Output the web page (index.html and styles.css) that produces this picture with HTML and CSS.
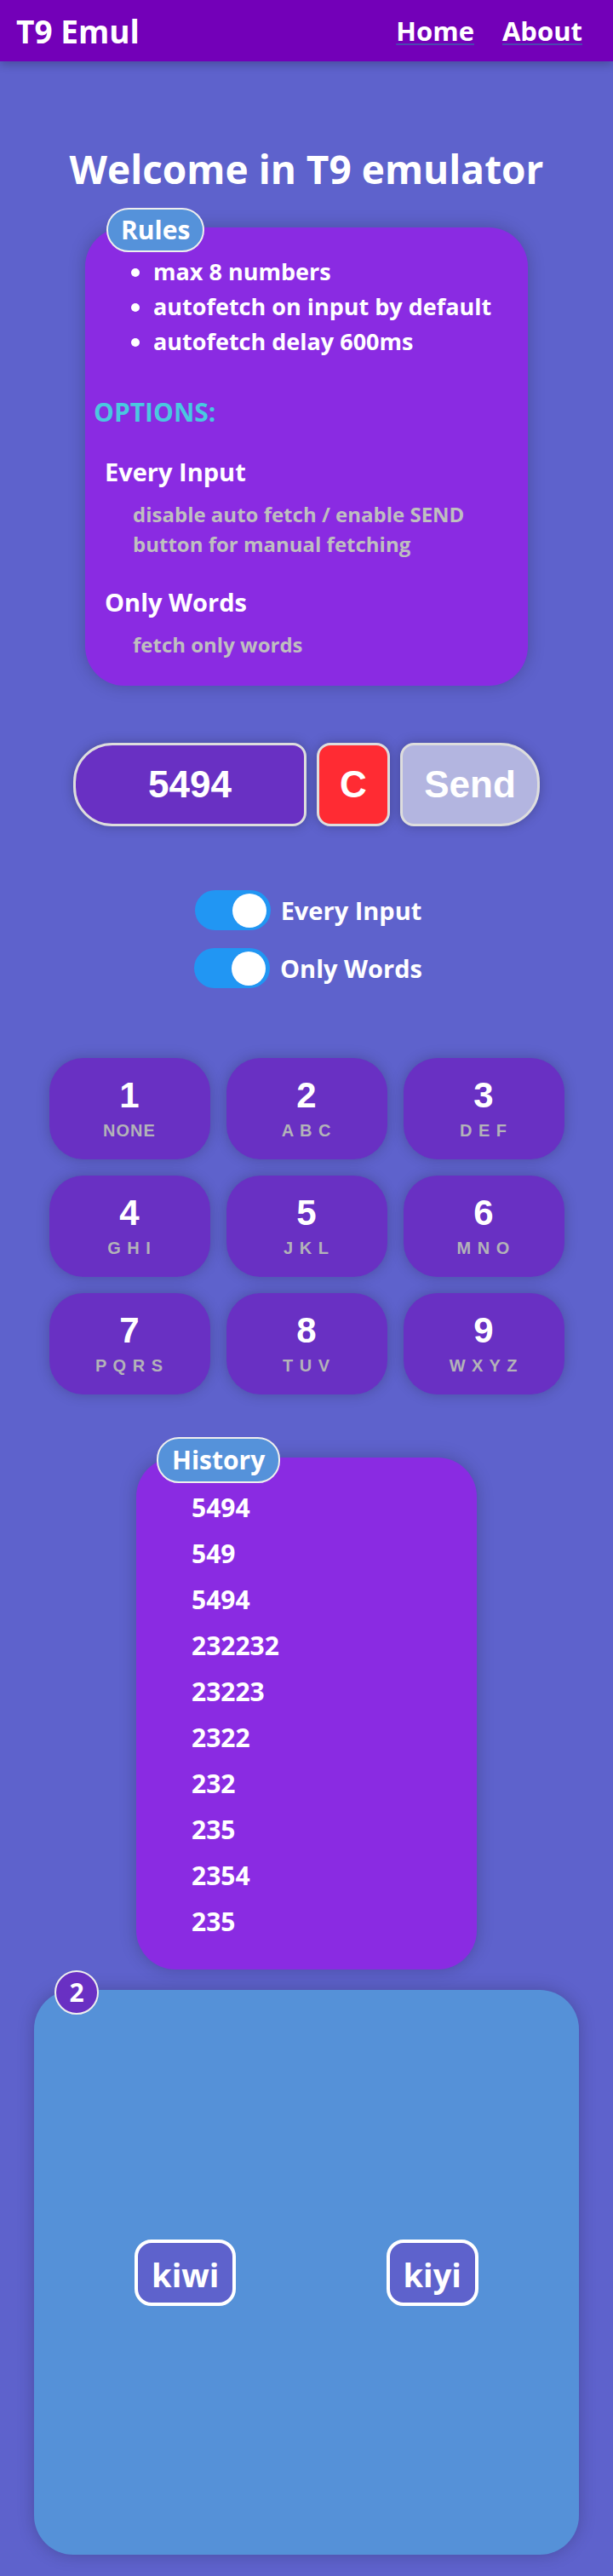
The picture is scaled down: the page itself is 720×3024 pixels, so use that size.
FILE: index.html
```
<!DOCTYPE html>
<html lang="en">
<head>
<meta charset="utf-8">
<title>T9 Emul</title>
<link rel="stylesheet" href="styles.css">
</head>
<body>
<header class="topbar">
  <div class="brand">T9 Emul</div>
  <nav class="nav">
    <a class="nav-link" href="#">Home</a>
    <a class="nav-link" href="#">About</a>
  </nav>
</header>
<main class="page">
  <h1 class="title">Welcome in T9 emulator</h1>

  <section class="card rules">
    <span class="badge">Rules</span>
    <ul class="rules-list">
      <li>max 8 numbers</li>
      <li>autofetch on input by default</li>
      <li>autofetch delay 600ms</li>
    </ul>
    <h3 class="options-title">OPTIONS:</h3>
    <dl class="options">
      <dt>Every Input</dt>
      <dd>disable auto fetch / enable SEND button for manual fetching</dd>
      <dt>Only Words</dt>
      <dd>fetch only words</dd>
    </dl>
  </section>

  <div class="entry">
    <div class="entry-field">5494</div>
    <div class="entry-btn clear">C</div>
    <div class="entry-btn send">Send</div>
  </div>

  <div class="toggles">
    <label class="toggle-row"><span class="switch"><span class="knob"></span></span><span class="toggle-label">Every Input</span></label>
    <label class="toggle-row"><span class="switch"><span class="knob"></span></span><span class="toggle-label">Only Words</span></label>
  </div>

  <div class="keypad">
    <div class="key"><span class="digit">1</span><span class="letters">NONE</span></div>
    <div class="key"><span class="digit">2</span><span class="letters">A B C</span></div>
    <div class="key"><span class="digit">3</span><span class="letters">D E F</span></div>
    <div class="key"><span class="digit">4</span><span class="letters">G H I</span></div>
    <div class="key"><span class="digit">5</span><span class="letters">J K L</span></div>
    <div class="key"><span class="digit">6</span><span class="letters">M N O</span></div>
    <div class="key"><span class="digit">7</span><span class="letters">P Q R S</span></div>
    <div class="key"><span class="digit">8</span><span class="letters">T U V</span></div>
    <div class="key"><span class="digit">9</span><span class="letters">W X Y Z</span></div>
  </div>

  <section class="card history">
    <span class="badge">History</span>
    <ul class="history-list">
      <li>5494</li>
      <li>549</li>
      <li>5494</li>
      <li>232232</li>
      <li>23223</li>
      <li>2322</li>
      <li>232</li>
      <li>235</li>
      <li>2354</li>
      <li>235</li>
    </ul>
  </section>

  <section class="card results">
    <span class="badge count">2</span>
    <div class="words">
      <span class="word">kiwi</span>
      <span class="word">kiyi</span>
    </div>
  </section>
</main>
</body>
</html>
```

FILE: styles.css
```
* { box-sizing: border-box; }

html, body {
  margin: 0;
  padding: 0;
}

body {
  background: #5e62cc;
  color: #ffffff;
  font-family: "Open Sans", "Noto Sans", sans-serif;
  font-weight: 700;
}

.topbar {
  height: 72px;
  background: #7300b8;
  display: flex;
  align-items: center;
  justify-content: space-between;
  padding: 0 36px 0 19px;
  box-shadow: 0 4px 10px rgba(0, 0, 0, 0.22);
  position: relative;
}

.brand {
  font-size: 37px;
  line-height: 1;
}

.nav {
  display: flex;
  gap: 33px;
}

.nav-link {
  color: #ffffff;
  font-size: 31px;
  line-height: 1;
  text-decoration: underline;
  text-decoration-color: #4b48b0;
  text-decoration-thickness: 2px;
  text-underline-offset: 3px;
}

.page {
  display: flex;
  flex-direction: column;
  align-items: center;
  padding-bottom: 25px;
}

.title {
  margin: 95px 0 0;
  font-size: 46px;
  line-height: 62px;
  font-weight: 700;
}

.card {
  position: relative;
  background: #8a2be2;
  border-radius: 46px;
  box-shadow: 0 0 20px rgba(0, 0, 0, 0.22);
}

.badge {
  position: absolute;
  left: 25px;
  top: -23px;
  background: #5592da;
  border: 2px solid #eeeeee;
  border-radius: 26px;
  padding: 4px 15px;
  font-size: 30px;
  line-height: 40px;
}

.rules {
  margin-top: 38px;
  width: 520px;
  padding: 31px 10px 31px 10px;
}

.rules-list {
  margin: 0;
  padding-left: 70px;
  font-size: 27px;
  line-height: 41px;
}

.options-title {
  margin: 43px 0 0;
  font-size: 30px;
  line-height: 40px;
  color: #4ac8e0;
}

.options {
  margin: 0;
}

.options dt {
  margin-top: 30px;
  padding-left: 13px;
  font-size: 29px;
  line-height: 40px;
}

.options dt + dd + dt {
  margin-top: 31px;
}

.options dd {
  margin: 12px 0 0 46px;
  font-size: 24px;
  line-height: 35px;
  color: #bfbfbf;
}

.entry {
  margin-top: 67px;
  display: flex;
  gap: 12px;
  font-family: "Liberation Sans", Arial, sans-serif;
  font-weight: 700;
  font-size: 44px;
}

.entry-field,
.entry-btn {
  height: 98px;
  border: 3px solid #dddddd;
  display: flex;
  align-items: center;
  justify-content: center;
  box-shadow: 0 0 14px rgba(0, 0, 0, 0.25);
}

.entry-field {
  width: 274px;
  background: #6930c3;
  border-radius: 46px 16px 16px 46px;
}

.clear {
  width: 86px;
  background: #ff2b33;
  border-radius: 16px;
}

.send {
  width: 164px;
  background: #b3b5e0;
  border-radius: 16px 46px 46px 16px;
}

.toggles {
  margin-top: 75px;
  padding-left: 4px;
  display: flex;
  flex-direction: column;
  align-items: center;
  gap: 21px;
}

.toggle-row {
  display: flex;
  align-items: center;
  gap: 12px;
  height: 47px;
}

.switch {
  width: 89px;
  height: 47px;
  border-radius: 24px;
  background: #2196f3;
  display: flex;
  align-items: center;
  justify-content: flex-end;
  padding-right: 5px;
}

.knob {
  width: 40px;
  height: 40px;
  border-radius: 50%;
  background: #ffffff;
}

.toggle-label {
  font-size: 29px;
  line-height: 40px;
}

.keypad {
  margin-top: 82px;
  display: grid;
  grid-template-columns: repeat(3, 189px);
  grid-auto-rows: 119px;
  column-gap: 19px;
  row-gap: 19px;
}

.key {
  background: #6930c3;
  border-radius: 40px;
  display: flex;
  flex-direction: column;
  align-items: center;
  justify-content: center;
  gap: 8px;
  box-shadow: 0 0 16px rgba(0, 0, 0, 0.22);
  font-family: "Liberation Sans", Arial, sans-serif;
  font-weight: 700;
}

.digit {
  font-size: 42px;
  line-height: 42px;
}

.letters {
  font-size: 20px;
  line-height: 24px;
  letter-spacing: 1px;
  color: #b3b3b8;
}

.history {
  margin-top: 74px;
  width: 400px;
  height: 601px;
  padding: 32px 0 28px 65px;
}

.history .badge {
  left: 24px;
  top: -24px;
  padding: 5px 16px;
}

.history-list {
  list-style: none;
  margin: 0;
  padding: 0;
  font-size: 30px;
  line-height: 54px;
}

.results {
  margin-top: 24px;
  width: 640px;
  height: 663px;
  background: #5591d8;
  border-radius: 46px;
}

.count {
  left: 24px;
  top: -23px;
  width: 52px;
  height: 52px;
  padding: 0;
  border-radius: 50%;
  background: #6930c3;
  display: flex;
  align-items: center;
  justify-content: center;
  font-size: 30px;
  line-height: 1;
}

.words {
  height: 100%;
  display: flex;
  align-items: center;
  justify-content: space-around;
  padding: 0 30px;
}

.word {
  background: #5e62cc;
  border: 4px solid #ffffff;
  border-radius: 20px;
  padding: 11px 16px 7px;
  font-size: 38px;
  line-height: 52px;
}
```
